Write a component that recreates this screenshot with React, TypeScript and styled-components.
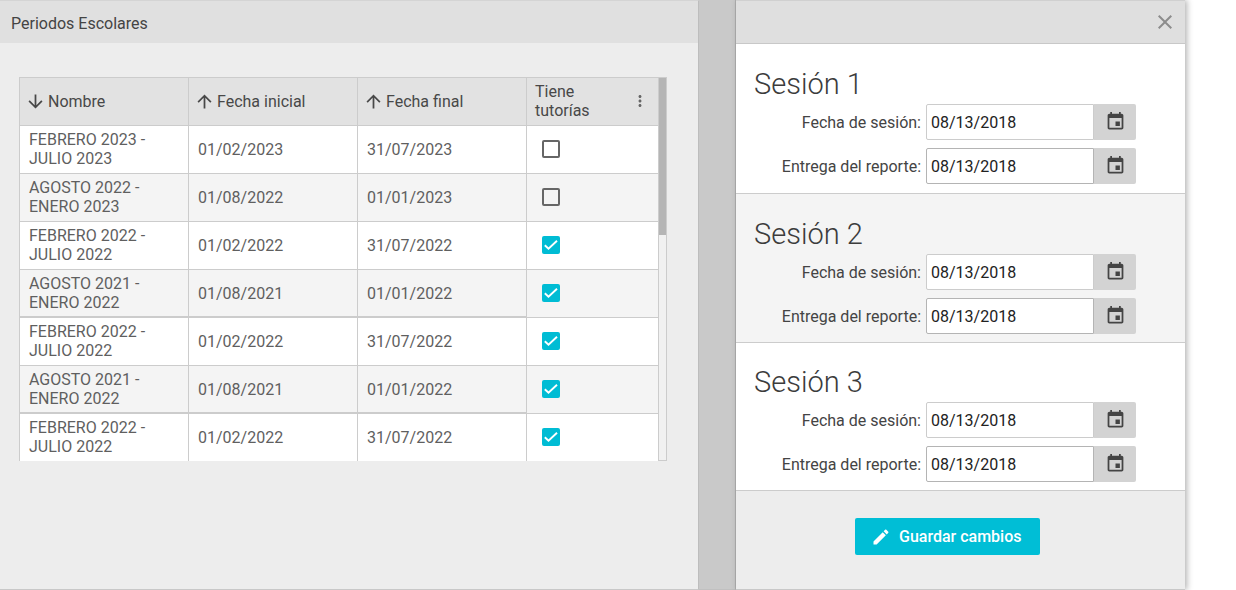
import React from 'react';
import styled, { createGlobalStyle, css } from 'styled-components';

const GlobalStyle = createGlobalStyle`
  html, body {
    margin: 0;
    padding: 0;
    background: #fff;
    overflow: hidden;
  }
  * {
    box-sizing: border-box;
  }
  body {
    font-family: Roboto, "Liberation Sans", sans-serif;
    font-size: 16px;
  }
`;

const Page = styled.div`
  display: flex;
  width: 1236px;
  height: 590px;
`;

const LeftPanel = styled.section`
  display: flex;
  flex-direction: column;
  width: 699px;
  height: 590px;
  background: #ededed;
  border-top: 1px solid #d4d4d4;
  border-bottom: 1px solid #c8c8c8;
  border-right: 1px solid #bdbdbd;
`;

const PanelHeader = styled.header`
  display: flex;
  align-items: center;
  height: 42px;
  padding: 2px 11px 0;
  background: #e0e0e0;
  color: #444;
  line-height: 19px;
`;

const PanelBody = styled.div`
  padding: 34px 0 0 19px;
`;

const TableFrame = styled.div`
  position: relative;
  width: 648px;
  height: 384px;
  overflow: hidden;
  border: 1px solid #ccc;
  border-bottom: none;
`;

const Row = styled.div<{ $even?: boolean; $heavy?: boolean }>`
  display: grid;
  grid-template-columns: 169px 169px 169px 132px;
  height: 48px;
  background: ${({ $even }) => ($even ? '#f4f4f4' : '#fff')};
  border-bottom: 1px solid #ccc;
  color: #5f5f5f;
  line-height: 19px;

  ${({ $heavy }) =>
    $heavy &&
    css`
      > div:not(:last-child) {
        box-shadow: inset 0 -1px 0 #ccc;
      }
    `}
`;

const HeadRow = styled(Row)`
  background: #e2e2e2;
  color: #484848;
`;

const Cell = styled.div`
  display: flex;
  align-items: center;
  padding-left: 9px;
  border-right: 1px solid #ccc;

  &:last-child {
    border-right: none;
  }
`;

const HeadCell = styled(Cell)`
  gap: 2px;
  padding-left: 5px;
`;

const MenuHeadCell = styled(Cell)`
  justify-content: space-between;
  padding: 0 10px 2px 8px;
  color: #484848;
`;

const MenuIcon = styled.span`
  display: flex;
  color: #666;
`;

const NameCell = styled(Cell)`
  padding-bottom: 1px;
`;

const CheckCell = styled(Cell)`
  padding: 0 0 1px 15px;
`;

const Box = styled.span<{ $checked: boolean }>`
  display: flex;
  align-items: center;
  justify-content: center;
  width: 18px;
  height: 18px;
  border-radius: 2px;
  border: ${({ $checked }) => ($checked ? 'none' : '2px solid #666')};
  background: ${({ $checked }) => ($checked ? '#00bcd4' : 'transparent')};
`;

const Scrollbar = styled.div`
  position: absolute;
  top: 0;
  right: 0;
  bottom: 0;
  width: 8px;
  background: #f1f1f1;
  border-left: 1px solid #ccc;
  border-bottom: 1px solid #ccc;
`;

const ScrollThumb = styled.div`
  width: 7px;
  height: 157px;
  background: #b5b5b5;
`;

const Divider = styled.div`
  width: 37px;
  height: 590px;
  background: #c9c9c9;
  border-right: 1px solid #b0b0b0;
  border-bottom: 1px solid #c0c0c0;
`;

const RightPanel = styled.section`
  display: flex;
  flex-direction: column;
  width: 449px;
  height: 590px;
  box-shadow: 2px 0 6px rgba(0, 0, 0, 0.3);
`;

const DialogHeader = styled.header`
  display: flex;
  align-items: center;
  justify-content: flex-end;
  flex: none;
  height: 44px;
  padding-right: 8px;
  background: #dfdfdf;
  border-top: 1px solid #d0d0d0;
  border-bottom: 1px solid #c8c8c8;
  color: #8c8c8c;
`;

const Session = styled.div<{ $even?: boolean; $height: number; $top: number }>`
  flex: none;
  height: ${({ $height }) => $height}px;
  padding: ${({ $top }) => $top}px 0 0 18px;
  background: ${({ $even }) => ($even ? '#f4f4f4' : '#fff')};
  border-bottom: 1px solid #ccc;
`;

const SessionTitle = styled.h2`
  margin: 0 0 3px;
  color: #3c3c3c;
  font-size: 29px;
  font-weight: 300;
  line-height: 33px;
`;

const Field = styled.div`
  display: grid;
  grid-template-columns: 167px 168px 42px;
  align-items: center;
  height: 36px;
  margin-bottom: 8px;
`;

const FieldLabel = styled.label`
  color: #444;
  font-size: 16px;
  text-align: right;
`;

const DateInput = styled.input<{ $strong?: boolean }>`
  width: 168px;
  height: 36px;
  padding: 0 4px;
  margin-left: 5px;
  background: #fff;
  border: 1px solid ${({ $strong }) => ($strong ? '#b4b4b4' : '#ccc')};
  border-radius: 2px 0 0 2px;
  outline: none;
  color: #222;
  font-family: inherit;
  font-size: 16px;
`;

const CalendarButton = styled.button`
  display: flex;
  align-items: center;
  justify-content: center;
  width: 42px;
  height: 36px;
  margin-left: 5px;
  padding: 0 0 2px 0;
  background: #d3d3d3;
  border: none;
  border-radius: 0 2px 2px 0;
  color: #444;
`;

const DialogFooter = styled.footer`
  flex: 1;
  padding: 27px 0 0 119px;
  background: #ededed;
  border-bottom: 1px solid #c8c8c8;
`;

const SaveButton = styled.button`
  display: flex;
  align-items: center;
  gap: 8px;
  width: 185px;
  height: 37px;
  padding: 0 0 0 16px;
  background: #00bed6;
  border: none;
  border-radius: 2px;
  color: #fff;
  font-family: inherit;
  font-size: 16px;
  font-weight: 500;
`;

const Icon = ({ d, size = 24 }: { d: string; size?: number }) => (
  <svg width={size} height={size} viewBox="0 0 24 24" fill="currentColor">
    <path d={d} />
  </svg>
);

const CheckMark = () => (
  <svg width="18" height="18" viewBox="0 0 18 18" fill="none">
    <path d="M2.8 9.2l3.7 3.5 8.5-8" stroke="#fff" strokeWidth="1.9" />
  </svg>
);

const ARROW_DOWN =
  'M20 12l-1.41-1.41L13 16.17V4h-2v12.17l-5.58-5.59L4 12l8 8 8-8z';
const ARROW_UP =
  'M4 12l1.41 1.41L11 7.83V20h2V7.83l5.58 5.59L20 12l-8-8-8 8z';
const MORE_VERT =
  'M12 8c1.1 0 2-.9 2-2s-.9-2-2-2-2 .9-2 2 .9 2 2 2zm0 2c-1.1 0-2 .9-2 2s.9 2 2 2 2-.9 2-2-.9-2-2-2zm0 6c-1.1 0-2 .9-2 2s.9 2 2 2 2-.9 2-2-.9-2-2-2z';
const EVENT =
  'M17 12h-5v5h5v-5zM16 1v2H8V1H6v2H5c-1.11 0-1.99.9-1.99 2L3 19c0 1.1.89 2 2 2h14c1.1 0 2-.9 2-2V5c0-1.1-.9-2-2-2h-1V1h-2zm3 18H5V8h14v11z';
const CLOSE =
  'M19 6.41L17.59 5 12 10.59 6.41 5 5 6.41 10.59 12 5 17.59 6.41 19 12 13.41 17.59 19 19 17.59 13.41 12z';
const EDIT =
  'M3 17.25V21h3.75L17.81 9.94l-3.75-3.75L3 17.25zM20.71 7.04c.39-.39.39-1.02 0-1.41l-2.34-2.34c-.39-.39-1.02-.39-1.41 0l-1.83 1.83 3.75 3.75 1.83-1.83z';

const periods = [
  { name: 'FEBRERO 2023 - JULIO 2023', start: '01/02/2023', end: '31/07/2023', tutoring: false },
  { name: 'AGOSTO 2022 - ENERO 2023', start: '01/08/2022', end: '01/01/2023', tutoring: false },
  { name: 'FEBRERO 2022 - JULIO 2022', start: '01/02/2022', end: '31/07/2022', tutoring: true },
  { name: 'AGOSTO 2021 - ENERO 2022', start: '01/08/2021', end: '01/01/2022', tutoring: true, heavy: true },
  { name: 'FEBRERO 2022 - JULIO 2022', start: '01/02/2022', end: '31/07/2022', tutoring: true },
  { name: 'AGOSTO 2021 - ENERO 2022', start: '01/08/2021', end: '01/01/2022', tutoring: true, heavy: true },
  { name: 'FEBRERO 2022 - JULIO 2022', start: '01/02/2022', end: '31/07/2022', tutoring: true },
];

const NameText = styled.span`
  width: 130px;
`;

const sessions = [
  { title: 'Sesión 1', height: 150, top: 24 },
  { title: 'Sesión 2', height: 149, top: 24 },
  { title: 'Sesión 3', height: 148, top: 23 },
];

const App: React.FC = () => (
  <Page>
    <GlobalStyle />
    <LeftPanel>
      <PanelHeader>Periodos Escolares</PanelHeader>
      <PanelBody>
        <TableFrame>
          <HeadRow>
            <HeadCell>
              <Icon d={ARROW_DOWN} size={21} />
              Nombre
            </HeadCell>
            <HeadCell>
              <Icon d={ARROW_UP} size={21} />
              Fecha inicial
            </HeadCell>
            <HeadCell>
              <Icon d={ARROW_UP} size={21} />
              Fecha final
            </HeadCell>
            <MenuHeadCell>
              <span>
                Tiene
                <br />
                tutorías
              </span>
              <MenuIcon>
                <Icon d={MORE_VERT} size={18} />
              </MenuIcon>
            </MenuHeadCell>
          </HeadRow>
          {periods.map((period, i) => (
            <Row key={i} $even={i % 2 === 1} $heavy={period.heavy}>
              <NameCell>
                <NameText>{period.name}</NameText>
              </NameCell>
              <Cell>{period.start}</Cell>
              <Cell>{period.end}</Cell>
              <CheckCell>
                <Box $checked={period.tutoring}>
                  {period.tutoring && <CheckMark />}
                </Box>
              </CheckCell>
            </Row>
          ))}
          <Scrollbar>
            <ScrollThumb />
          </Scrollbar>
        </TableFrame>
      </PanelBody>
    </LeftPanel>
    <Divider />
    <RightPanel>
      <DialogHeader>
        <Icon d={CLOSE} />
      </DialogHeader>
      {sessions.map((session, i) => (
        <Session key={session.title} $even={i === 1} $height={session.height} $top={session.top}>
          <SessionTitle>{session.title}</SessionTitle>
          <Field>
            <FieldLabel>Fecha de sesión:</FieldLabel>
            <DateInput readOnly value="08/13/2018" />
            <CalendarButton>
              <Icon d={EVENT} size={21} />
            </CalendarButton>
          </Field>
          <Field>
            <FieldLabel>Entrega del reporte:</FieldLabel>
            <DateInput readOnly $strong value="08/13/2018" />
            <CalendarButton>
              <Icon d={EVENT} size={21} />
            </CalendarButton>
          </Field>
        </Session>
      ))}
      <DialogFooter>
        <SaveButton>
          <Icon d={EDIT} size={20} />
          Guardar cambios
        </SaveButton>
      </DialogFooter>
    </RightPanel>
  </Page>
);

export default App;
